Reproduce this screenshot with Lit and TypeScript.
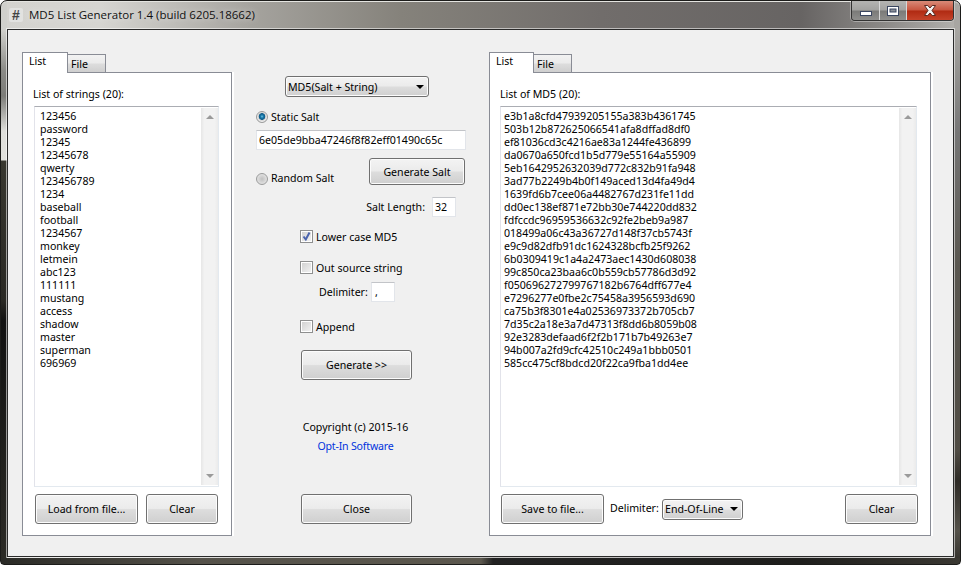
import { LitElement, html, css, svg } from "lit";
import { customElement } from "lit/decorators.js";

const STRINGS = ["123456","password","12345","12345678","qwerty","123456789","1234","baseball","football","1234567","monkey","letmein","abc123","111111","mustang","access","shadow","master","superman","696969"];
const HASHES = ["e3b1a8cfd47939205155a383b4361745","503b12b872625066541afa8dffad8df0","ef81036cd3c4216ae83a1244fe436899","da0670a650fcd1b5d779e55164a55909","5eb1642952632039d772c832b91fa948","3ad77b2249b4b0f149aced13d4fa49d4","1639fd6b7cee06a4482767d231fe11dd","dd0ec138ef871e72bb30e744220dd832","fdfccdc96959536632c92fe2beb9a987","018499a06c43a36727d148f37cb5743f","e9c9d82dfb91dc1624328bcfb25f9262","6b0309419c1a4a2473aec1430d608038","99c850ca23baa6c0b559cb57786d3d92","f050696272799767182b6764dff677e4","e7296277e0fbe2c75458a3956593d690","ca75b3f8301e4a02536973372b705cb7","7d35c2a18e3a7d47313f8dd6b8059b08","92e3283defaad6f2f2b171b7b49263e7","94b007a2fd9cfc42510c249a1bbb0501","585cc475cf8bdcd20f22ca9fba1dd4ee"];

@customElement("app-root")
export class AppRoot extends LitElement {
  static styles = css`
    :host { display: block; width: 961px; height: 565px; background: #fff; font-family: "Noto Sans", "DejaVu Sans", sans-serif; font-size: 10.6px; color: #000; overflow: hidden; }
    * { box-sizing: border-box; }
    .frame { width: 961px; height: 565px; display: flex; flex-direction: column; border-radius: 7px 7px 4px 4px; overflow: hidden;
      padding: 0 6px 7px 6px; border: 1px solid #1c1c1a; box-shadow: inset 0 1px 0 #e4e4e0;
      background:
        linear-gradient(90deg, #2a2a26, #55524a 200px, #5c584e 480px, #222 492px, #1e1e1c 800px, #3a3832 100%) bottom / 100% 6px no-repeat,
        linear-gradient(180deg, #d0d0cc 29px, #8a8a86 70px, #7c7c78 95px, #dededa 130px, #e2e2de 159px, #38372f 160px, #2a2924 300px, #111 320px, #2c2b26 560px) left / 6px 100% no-repeat,
        linear-gradient(180deg, #a8a6a2 29px, #777 130px, #5a5750 265px, #504c44 450px, #2e2b26 480px, #55524a 530px, #33312c 560px) right / 6px 100% no-repeat,
        linear-gradient(90deg, #d4d3cf 0, #d6d5d1 100px, #a5a39e 250px, #85827b 400px, #716d6b 600px, #676463 800px, #8a8886 880px, #b4b2ae 100%); }
    .titlebar { height: 28px; flex: none; display: flex; align-items: flex-start; }
    .appicon { width: 14px; height: 14px; margin: 7px 0 0 2px; background: #e2e2e0; border-radius: 2px; color: #444; font: bold 14px/14px "Liberation Sans", sans-serif; text-align: center; }
    .title { margin: 5px 0 0 6px; font-family: "Open Sans", "Noto Sans", sans-serif; font-size: 11.5px; line-height: 18px; color: #111; white-space: nowrap; text-shadow: 0 0 6px rgba(255,255,255,.7); }
    .controls { margin-left: auto; display: flex; height: 20px; border: 1px solid #333; border-top: none; border-radius: 0 0 4px 4px; overflow: hidden; box-shadow: 0 0 0 1px rgba(255,255,255,.35); }
    .ctl { height: 19px; display: flex; justify-content: center; border-right: 1px solid #d8d8d8; background: linear-gradient(#b4b4b2 0%, #a2a2a0 48%, #7a7a78 52%, #8e8e8c 100%); }
    .ctl svg { display: block; flex: none; }
    .ctl.min { width: 28px; padding-top: 10px; } .ctl.max { width: 27px; padding-top: 5px; }
    .ctl.close { width: 46px; border-right: none; padding-top: 4px; background: linear-gradient(#d98a78 0%, #c8553f 48%, #b02a12 52%, #c4432a 100%); }
    .client { flex: 1; display: flex; background: #f0f0f0; border: 1px solid #2a2a2a; box-shadow: 0 0 0 1px rgba(255,255,255,.55); padding: 23px 22px 0 14px; }
    .tabset { display: flex; flex-direction: column; flex: none; }
    .tabset.left { width: 210px; }
    .tabset.right { width: 442px; }
    .tabs { display: flex; height: 19px; align-items: flex-end; position: relative; z-index: 1; }
    .tab { height: 18px; padding-left: 3px; line-height: 19px; border: 1px solid #898c95; border-left: none; border-bottom: none; background: linear-gradient(#f2f2f2 0%, #ebebeb 45%, #dcdcdc 55%, #cfcfcf 100%); color: #000; }
    .tab.on { height: 21px; margin-bottom: -1px; background: #fff; line-height: 17px; padding-left: 6px; border-left: 1px solid #898c95; }
    .left .tab.on { width: 46px; } .left .tab.off { width: 38px; }
    .right .tab.on { width: 45px; } .right .tab.off { width: 38px; }
    .panel { height: 464px; background: #fff; border: 1px solid #898c95; padding: 14px 12px 0 11px; box-shadow: 2px 0 0 #fff; display: flex; flex-direction: column; }
    .right .panel { padding-left: 10px; }
    .label { height: 14px; line-height: 14px; white-space: nowrap; }
    .left .label { margin-left: -1px; }
    .listbox { margin-top: 5px; height: 381px; border: 1px solid #e3e9ef; border-top-color: #abadb3; border-left-color: #e2e3ea; background: #fff; display: flex; }
    .right .listbox { margin-right: 1px; }
    .items { flex: 1; padding: 3px 0 0 5px; line-height: 13px; white-space: nowrap; }
    .right .items { padding-left: 3px; }
    .items div { height: 13px; }
    .scroll { width: 17px; flex: none; margin: 1px 0; background: linear-gradient(90deg, #e6e6e6, #f2f2f2 20%, #f2f2f2 80%, #ebebeb); display: flex; flex-direction: column; justify-content: space-between; align-items: center; padding: 7px 0; }
    .scroll svg { display: block; }
    .btnrow { display: flex; margin-top: 7px; align-items: center; height: 30px; }
    .btn { display: flex; align-items: center; justify-content: center; height: 30px; flex: none; border: 1px solid #707070; border-radius: 3px; white-space: nowrap;
      background: linear-gradient(#f3f3f3 0%, #ebebeb 48%, #dddddd 52%, #cfcfcf 100%); box-shadow: inset 0 0 0 1px #fcfcfc; color: #000; }
    .w103 { width: 103px; } .w72 { width: 72px; margin-left: 8px; } .ml1 { margin-left: 1px; }
    .clr { width: 73px; margin-left: auto; }
    .combo { display: flex; align-items: center; height: 21px; flex: none; border: 1px solid #707070; border-radius: 3px; padding: 0 4px 0 2px; justify-content: space-between; white-space: nowrap;
      background: linear-gradient(#f3f3f3 0%, #ebebeb 48%, #dddddd 52%, #cfcfcf 100%); box-shadow: inset 0 0 0 1px #fcfcfc; }
    .combo.big { width: 144px; } .combo.small { width: 81px; }
    .caret { width: 0; height: 0; border-left: 4px solid transparent; border-right: 4px solid transparent; border-top: 4px solid #000; flex: none; }
    .center { width: 257px; flex: none; display: flex; flex-direction: column; }
    .row { display: flex; align-items: center; flex: none; white-space: nowrap; }
    .edit { height: 20px; border: 1px solid #e2e5ea; border-top-color: #c2c4c8; background: #fff; padding: 0 2px; display: flex; align-items: center; flex: none; }
    .edit.sm { width: 24px; }
    .radio { width: 12px; height: 12px; border-radius: 50%; border: 1px solid #9a9b9b; background: radial-gradient(circle, #c0c0c0 0, #dcdcdc 60%, #f2f2f2 100%); flex: none; margin-right: 3px; }
    .radio.on { background: radial-gradient(circle at 50% 45%, #6fc8ea 0, #1a78a8 1.5px, #0d5a88 3px, #cfcfcf 3.6px, #f0f0f0 5px, #c8c8c8 6px); }
    .check { width: 13px; height: 13px; border: 1px solid #8e8f8f; background: linear-gradient(135deg, #cfcfcf, #f4f4f4); box-shadow: inset 0 0 0 1px #fff; flex: none; margin-right: 3px; display: block; }
    .check svg { display: block; }
    .link { color: #0033dd; letter-spacing: -.2px; }
    .r-select { margin: 23px 0 0 53px; }
    .r-static { margin: 13px 0 0 24px; height: 13px; }
    .r-salt { margin: 7px 0 0 24px; width: 210px; }
    .r-random { margin: 8px 0 0 24px; height: 27px; align-items: flex-end; }
    .r-random .btn { margin-left: auto; width: 96px; height: 27px; margin-right: 24px; }
    .r-len { margin-top: 12px; height: 20px; padding-right: 33px; justify-content: flex-end; gap: 7px; }
    .r-c1 { margin: 13px 0 0 68px; height: 13px; }
    .r-c2 { margin: 18px 0 0 68px; height: 13px; }
    .r-delim { margin: 8px 0 0 87px; height: 20px; }
    .dlabel { width: 52px; }
    .r-delim .edit { padding-left: 3px; }
    .r-c3 { margin: 18px 0 0 68px; height: 13px; }
    .r-gen { margin: 17px 0 0 69px; width: 111px; }
    .r-copy { margin: 40px 0 0 68px; width: 111px; height: 14px; justify-content: center; }
    .r-opt { margin: 5px 0 0 68px; width: 111px; height: 14px; justify-content: center; }
    .r-close { margin: 41px 0 0 69px; width: 111px; }
    .mlabel { width: 45px; margin: 0 7px 0 6px; position: relative; top: -1px; white-space: nowrap; }
  `;

  private arrow(up: boolean) {
    return html`<svg width="8" height="4" viewBox="0 0 8 4">${svg`<path d=${up ? "M4 0L8 4H0Z" : "M0 0H8L4 4Z"} fill="#9a9a9a"/>`}</svg>`;
  }

  private list(items: string[]) {
    return html`<div class="listbox">
      <div class="items">${items.map((s) => html`<div>${s}</div>`)}</div>
      <div class="scroll">${this.arrow(true)}${this.arrow(false)}</div>
    </div>`;
  }

  private check(on: boolean) {
    return html`<span class="check">${on ? html`<svg width="11" height="11" viewBox="0 0 11 11">${svg`<path d="M2.5 5.5L4.8 8.5L8.5 1.5" fill="none" stroke="#4a63ad" stroke-width="2"/>`}</svg>` : ""}</span>`;
  }

  render() {
    return html`<div class="frame">
      <div class="titlebar">
        <div class="appicon">#</div>
        <div class="title">MD5 List Generator 1.4 (build 6205.18662)</div>
        <div class="controls">
          <div class="ctl min"><svg width="12" height="5" viewBox="0 0 12 5">${svg`<rect x=".5" y=".5" width="11" height="4" fill="#fff" stroke="#3a4660"/>`}</svg></div>
          <div class="ctl max"><svg width="12" height="10" viewBox="0 0 12 10">${svg`<rect x=".5" y=".5" width="11" height="9" fill="#fff" stroke="#3a4660"/><rect x="3" y="3" width="6" height="3" fill="#8a8f98" stroke="#3a4660"/>`}</svg></div>
          <div class="ctl close"><svg width="12" height="11" viewBox="0 0 12 11">${svg`<path d="M.5.5H3.8L6 3L8.2.5H11.5L8 5.5L11.5 10.5H8.2L6 8L3.8 10.5H.5L4 5.5Z" fill="#f4f4f4" stroke="#5a2a22"/>`}</svg></div>
        </div>
      </div>
      <div class="client">
        <div class="tabset left">
          <div class="tabs"><div class="tab on">List</div><div class="tab off">File</div></div>
          <div class="panel">
            <div class="label">List of strings (20):</div>
            ${this.list(STRINGS)}
            <div class="btnrow">
              <div class="btn w103 ml1">Load from file...</div>
              <div class="btn w72">Clear</div>
            </div>
          </div>
        </div>
        <div class="center">
          <div class="row r-select"><div class="combo big">MD5(Salt + String)<span class="caret"></span></div></div>
          <div class="row r-static"><span class="radio on"></span>Static Salt</div>
          <div class="edit r-salt">6e05de9bba47246f8f82eff01490c65c</div>
          <div class="row r-random"><span class="radio"></span>Random Salt<div class="btn">Generate Salt</div></div>
          <div class="row r-len">Salt Length:<div class="edit sm">32</div></div>
          <div class="row r-c1">${this.check(true)}Lower case MD5</div>
          <div class="row r-c2">${this.check(false)}Out source string</div>
          <div class="row r-delim"><span class="dlabel">Delimiter:</span><div class="edit sm">,</div></div>
          <div class="row r-c3">${this.check(false)}Append</div>
          <div class="btn r-gen">Generate &gt;&gt;</div>
          <div class="row r-copy">Copyright (c) 2015-16</div>
          <div class="row r-opt link">Opt-In Software</div>
          <div class="btn r-close">Close</div>
        </div>
        <div class="tabset right">
          <div class="tabs"><div class="tab on">List</div><div class="tab off">File</div></div>
          <div class="panel">
            <div class="label">List of MD5 (20):</div>
            ${this.list(HASHES)}
            <div class="btnrow">
              <div class="btn w103 ml1">Save to file...</div>
              <span class="mlabel">Delimiter:</span>
              <div class="combo small">End-Of-Line<span class="caret"></span></div>
              <div class="btn clr">Clear</div>
            </div>
          </div>
        </div>
      </div>
    </div>`;
  }
}
